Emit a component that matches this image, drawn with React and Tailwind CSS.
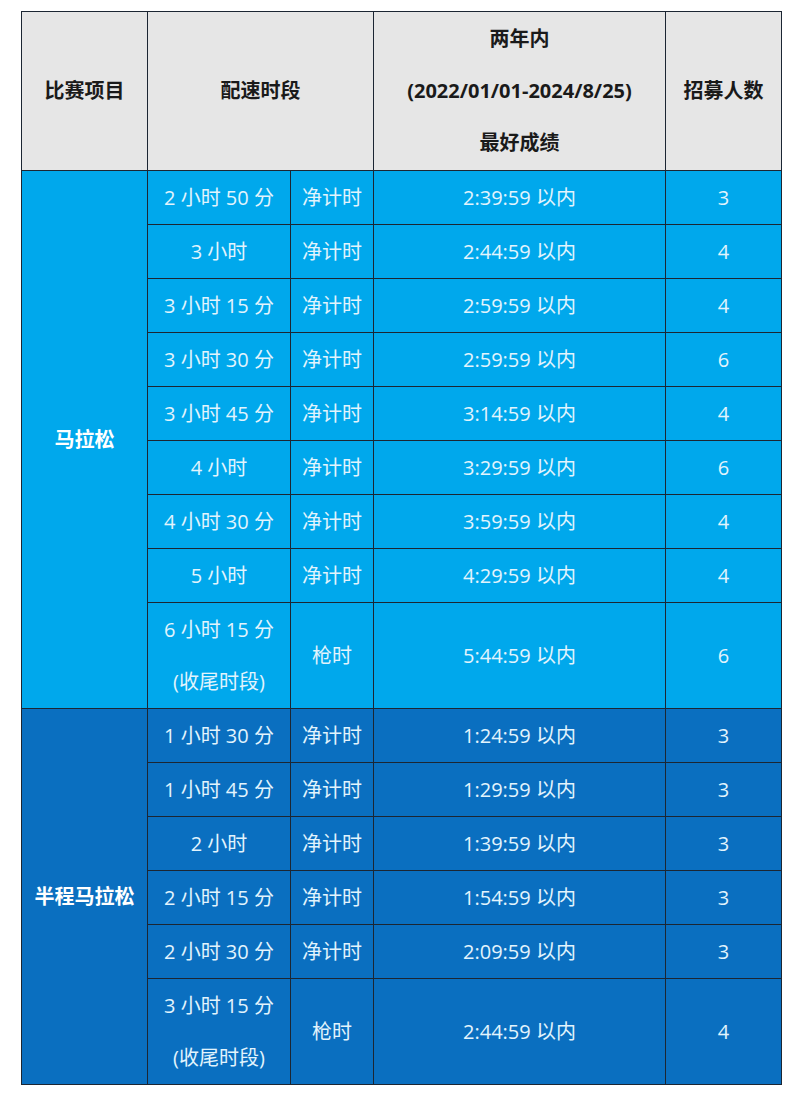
import React from 'react';

const marathon = [
  ['2 小时 50 分', '净计时', '2:39:59 以内', '3'],
  ['3 小时', '净计时', '2:44:59 以内', '4'],
  ['3 小时 15 分', '净计时', '2:59:59 以内', '4'],
  ['3 小时 30 分', '净计时', '2:59:59 以内', '6'],
  ['3 小时 45 分', '净计时', '3:14:59 以内', '4'],
  ['4 小时', '净计时', '3:29:59 以内', '6'],
  ['4 小时 30 分', '净计时', '3:59:59 以内', '4'],
  ['5 小时', '净计时', '4:29:59 以内', '4'],
  ['6 小时 15 分|(收尾时段)', '枪时', '5:44:59 以内', '6'],
];

const half = [
  ['1 小时 30 分', '净计时', '1:24:59 以内', '3'],
  ['1 小时 45 分', '净计时', '1:29:59 以内', '3'],
  ['2 小时', '净计时', '1:39:59 以内', '3'],
  ['2 小时 15 分', '净计时', '1:54:59 以内', '3'],
  ['2 小时 30 分', '净计时', '2:09:59 以内', '3'],
  ['3 小时 15 分|(收尾时段)', '枪时', '2:44:59 以内', '4'],
];

const cell = 'border border-[#1c2633] text-center align-middle p-0';

const Group = ({ name, rows, bg }) =>
  rows.map((row, i) => {
    const [pace, timing, best, count] = row;
    const tall = pace.includes('|');
    return (
      <tr key={pace} className={`${bg} text-[#e2f4fd]`}>
        {i === 0 && (
          <td rowSpan={rows.length} className={`${cell} font-bold text-white`}>{name}</td>
        )}
        <td className={`${cell} ${tall ? 'h-[106px]' : 'h-[54px]'}`}>
          {tall ? (
            <div className="flex flex-col leading-[52px]">
              {pace.split('|').map((t) => <span key={t}>{t}</span>)}
            </div>
          ) : pace}
        </td>
        <td className={cell}>{timing}</td>
        <td className={cell}>{best}</td>
        <td className={cell}>{count}</td>
      </tr>
    );
  });

export default function App() {
  return (
    <div className="min-h-[1093px] w-[800px] bg-white pt-[11px] pl-[21px] font-['Open_Sans','Noto_Sans_CJK_SC',sans-serif] text-[20px]">
      <table className="table-fixed border-collapse">
        <colgroup>
          <col className="w-[126px]" />
          <col className="w-[143px]" />
          <col className="w-[83px]" />
          <col className="w-[292px]" />
          <col className="w-[116px]" />
        </colgroup>
        <thead>
          <tr className="h-[159px] bg-[#e6e6e6] font-bold text-[#1a1a1a]">
            <th className={cell}>比赛项目</th>
            <th colSpan={2} className={cell}>配速时段</th>
            <th className={cell}>
              <div className="flex flex-col leading-[52px]">
                <span>两年内</span>
                <span>(2022/01/01-2024/8/25)</span>
                <span>最好成绩</span>
              </div>
            </th>
            <th className={cell}>招募人数</th>
          </tr>
        </thead>
        <tbody>
          <Group name="马拉松" rows={marathon} bg="bg-[#00a8ec]" />
          <Group name="半程马拉松" rows={half} bg="bg-[#0a6fc0]" />
        </tbody>
      </table>
    </div>
  );
}
